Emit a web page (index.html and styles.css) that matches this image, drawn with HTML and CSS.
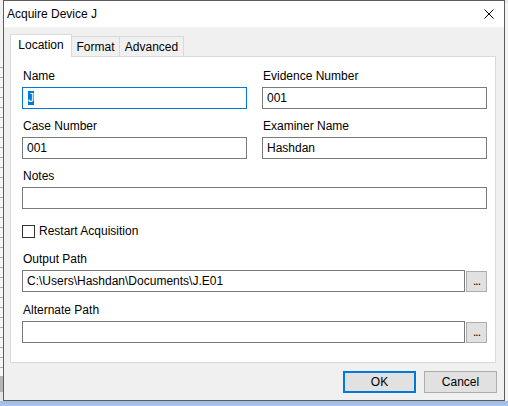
FILE: index.html
```html
<!DOCTYPE html>
<html>
<head>
<meta charset="utf-8">
<link rel="stylesheet" href="styles.css">
</head>
<body>
<div class="desktop">
  <div class="side-left"></div>
  <div class="dialog">
    <div class="titlebar">
      <span class="title">Acquire Device J</span>
      <svg class="close" width="10" height="10" viewBox="0 0 10 10"><path d="M0.5 0.5 L9.5 9.5 M9.5 0.5 L0.5 9.5" stroke="#000" stroke-width="1" fill="none"/></svg>
    </div>
    <div class="dlg-body">
      <div class="tabs">
        <div class="tab active">Location</div>
        <div class="tab t-format">Format</div>
        <div class="tab t-adv">Advanced</div>
      </div>
      <div class="panel">
        <div class="pair">
          <div class="field"><div class="lbl">Name</div><div class="input focus"><span class="sel">J</span></div></div>
          <div class="field"><div class="lbl">Evidence Number</div><div class="input">001</div></div>
        </div>
        <div class="pair gap8">
          <div class="field"><div class="lbl">Case Number</div><div class="input">001</div></div>
          <div class="field"><div class="lbl">Examiner Name</div><div class="input">Hashdan</div></div>
        </div>
        <div class="field gap8"><div class="lbl">Notes</div><div class="input"></div></div>
        <div class="check"><span class="box"></span><span>Restart Acquisition</span></div>
        <div class="field gap11"><div class="lbl">Output Path</div>
          <div class="pathrow"><div class="input grow">C:\Users\Hashdan\Documents\J.E01</div><div class="browse">...</div></div>
        </div>
        <div class="field gap9"><div class="lbl">Alternate Path</div>
          <div class="pathrow"><div class="input grow"></div><div class="browse">...</div></div>
        </div>
      </div>
      <div class="buttons">
        <div class="btn default">OK</div>
        <div class="btn">Cancel</div>
      </div>
    </div>
  </div>
  <div class="side-right"></div>
  <div class="strip-bottom"></div>
</div>
</body>
</html>
```

FILE: styles.css
```css
html, body {
  margin: 0;
  padding: 0;
}
body {
  width: 508px;
  height: 406px;
  overflow: hidden;
  font-family: "Liberation Sans", Arial, sans-serif;
  font-size: 12px;
  line-height: 16px;
  color: #000;
  background: #f3f3f3;
}
.desktop {
  display: grid;
  grid-template-columns: 3px 502px 3px;
  grid-template-rows: 401px 5px;
}
.side-left {
  background:
    linear-gradient(to bottom, #f2f2f2 0 60px, transparent 60px 376px, #b4b4b4 376px 392px, #e6e6e6 392px),
    repeating-linear-gradient(to bottom, #f6f6f6 0 7px, #b0b0b0 7px 8px, #f6f6f6 8px 10px);
}
.side-right {
  background: linear-gradient(to bottom, #e9e9e9 0 3px, #f4f4f4 3px);
}
.strip-bottom {
  grid-column: 1 / -1;
  background: linear-gradient(to bottom, #9dbbe3, #abc6ea);
}
.dialog {
  box-sizing: border-box;
  width: 502px;
  height: 401px;
  border: 1px solid #5c5c5c;
  background: #f0f0f0;
  display: flex;
  flex-direction: column;
}
.titlebar {
  height: 26px;
  background: #fff;
  display: flex;
  align-items: center;
  justify-content: space-between;
  padding: 0 10px 0 3px;
}
.close {
  display: block;
}
.dlg-body {
  flex: 1;
  padding: 7px 7px 0 6px;
  display: flex;
  flex-direction: column;
}
.tabs {
  display: flex;
  align-items: flex-end;
  height: 23px;
  margin-bottom: -1px;
}
.tab {
  box-sizing: border-box;
  border: 1px solid #d9d9d9;
  background: #f0f0f0;
  height: 21px;
  padding-top: 2px;
  text-align: center;
}
.tab.active {
  position: relative;
  z-index: 1;
  background: #fff;
  border-bottom: none;
  height: 23px;
  width: 62px;
}
.t-format {
  width: 49px;
  margin-left: -1px;
}
.t-adv {
  width: 65px;
  margin-left: -1px;
}
.panel {
  box-sizing: border-box;
  height: 307px;
  margin-right: 1px;
  border: 1px solid #d9d9d9;
  background: #fff;
  padding: 10px 8px 19px 11px;
  display: flex;
  flex-direction: column;
}
.pair {
  display: grid;
  grid-template-columns: 225px 225px;
  column-gap: 15px;
}
.field {
  display: flex;
  flex-direction: column;
  gap: 3px;
}
.lbl {
  height: 16px;
  padding: 1px 0 0 1px;
  white-space: nowrap;
}
.gap8 { margin-top: 8px; }
.gap9 { margin-top: 9px; }
.gap11 { margin-top: 11px; }
.input {
  box-sizing: border-box;
  height: 22px;
  border: 1px solid #7a7a7a;
  background: #fff;
  padding: 2px 4px;
  white-space: nowrap;
  overflow: hidden;
}
.input.focus {
  border-color: #0078d7;
}
.sel {
  display: inline-block;
  margin-left: 1px;
  margin-top: 1px;
  height: 14px;
  line-height: 14px;
  padding: 0;
  background: #0078d7;
  color: #fff;
  vertical-align: top;
}
.check {
  margin-top: 14px;
  height: 16px;
  display: flex;
  align-items: center;
  gap: 4px;
}
.box {
  box-sizing: border-box;
  width: 13px;
  height: 13px;
  border: 1px solid #333;
  background: #fff;
}
.pathrow {
  display: flex;
  align-items: flex-start;
  gap: 1px;
}
.grow {
  flex: 1;
}
.browse {
  box-sizing: border-box;
  width: 21px;
  height: 21px;
  margin-top: 1px;
  border: 1px solid #adadad;
  background: #e1e1e1;
  padding-top: 1px;
  text-align: center;
  letter-spacing: -1px;
}
.buttons {
  margin-top: 8px;
  display: flex;
  justify-content: flex-end;
  gap: 8px;
}
.btn {
  box-sizing: border-box;
  width: 73px;
  height: 22px;
  border: 1px solid #adadad;
  background: #e1e1e1;
  display: flex;
  align-items: center;
  justify-content: center;
}
.btn.default {
  border: 2px solid #0078d7;
}
```
